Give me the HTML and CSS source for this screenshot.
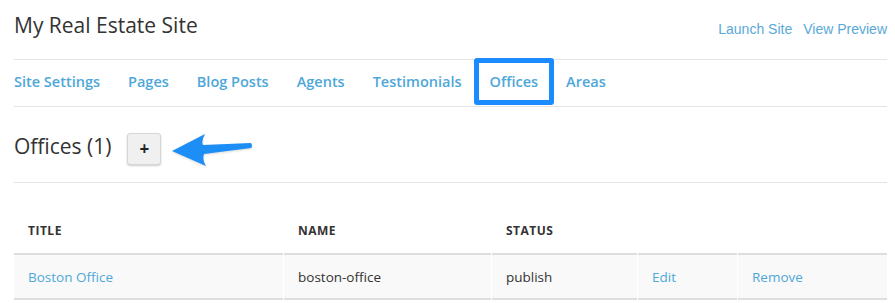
FILE: index.html
```html
<!DOCTYPE html>
<html lang="en">
<head>
    <meta charset="UTF-8">
    <title>My Real Estate Site - Offices</title>
    <link rel="stylesheet" href="styles.css">
</head>
<body>
    <div class="page">
        <header class="site-header">
            <h1>My Real Estate Site</h1>
            <div class="site-links">
                <a href="#">Launch Site</a>
                <a href="#">View Preview</a>
            </div>
        </header>
        <nav class="site-nav">
            <a href="#">Site Settings</a>
            <a href="#">Pages</a>
            <a href="#">Blog Posts</a>
            <a href="#">Agents</a>
            <a href="#">Testimonials</a>
            <a href="#" class="active">Offices</a>
            <a href="#">Areas</a>
        </nav>
        <div class="section-head">
            <h2>Offices (1)</h2>
            <button class="add-button">+</button>
            <svg class="arrow" width="84" height="40" viewBox="0 0 84 40">
                <path d="M1 21 L34 4 Q30 11 32 15 L80 13 Q82 16 80 18 L33 24 Q31 30 35 36 Z" fill="#1e8ef7"/>
            </svg>
        </div>
        <table class="list">
            <thead>
                <tr>
                    <th class="col-title">Title</th>
                    <th class="col-name">Name</th>
                    <th class="col-status">Status</th>
                    <th class="col-edit"></th>
                    <th></th>
                </tr>
            </thead>
            <tbody>
                <tr>
                    <td><a href="#">Boston Office</a></td>
                    <td>boston-office</td>
                    <td>publish</td>
                    <td><a href="#">Edit</a></td>
                    <td><a href="#">Remove</a></td>
                </tr>
            </tbody>
        </table>
    </div>
</body>
</html>
```

FILE: styles.css
```css
* {
    margin: 0;
    padding: 0;
    box-sizing: border-box;
}
body {
    font-family: 'Open Sans', sans-serif;
    color: #333;
    background: white;
}
a {
    color: #4ea7d9;
    text-decoration: none;
}
.page {
    padding: 0 8px 0 14px;
}
.site-header {
    display: flex;
    justify-content: space-between;
    align-items: flex-start;
    height: 60px;
    border-bottom: 1px solid #e4e4e4;
}
.site-header h1 {
    font-size: 21px;
    font-weight: 400;
    line-height: 24px;
    margin-top: 13px;
    color: #333;
}
.site-links {
    display: flex;
    gap: 11px;
    margin-top: 21px;
    font-family: 'Liberation Sans', sans-serif;
    font-size: 14px;
}
.site-links a {
    color: #5aa9d6;
}
.site-nav {
    display: flex;
    align-items: center;
    gap: 28px;
    height: 47px;
    padding-bottom: 3px;
    border-bottom: 1px solid #e4e4e4;
}
.site-nav a {
    font-size: 14.5px;
    font-weight: 600;
    position: relative;
}
.site-nav a.active::after {
    content: '';
    position: absolute;
    left: -16px;
    right: -16px;
    top: -14px;
    bottom: -14px;
    border: 5px solid #1a8cff;
    border-radius: 3px;
}
.section-head {
    display: flex;
    align-items: center;
    height: 76px;
    padding-top: 2px;
    border-bottom: 1px solid #e4e4e4;
}
.section-head h2 {
    font-size: 21px;
    font-weight: 400;
}
.add-button {
    width: 34px;
    height: 32px;
    margin: 6px 0 0 16px;
    background: #f0f0f0;
    border: 1px solid #d6d6d6;
    border-radius: 3px;
    box-shadow: 0 1px 2px rgba(0, 0, 0, 0.2);
    font-size: 17px;
    font-weight: 700;
    color: #222;
    font-family: 'Open Sans', sans-serif;
}
.arrow {
    margin: 8px 0 0 10px;
    filter: drop-shadow(0 1px 1px rgba(0, 0, 0, 0.15));
}
.list {
    width: calc(100% + 2px);
    margin: 25px 0 0 -1px;
    border-collapse: separate;
    border-spacing: 1px 0;
    font-size: 13.5px;
}
.list th {
    text-align: left;
    text-transform: uppercase;
    font-size: 12px;
    font-weight: 700;
    letter-spacing: 0.5px;
    padding: 14px;
    border-bottom: 2px solid #dedede;
}
.list td {
    background: #f9f9f9;
    padding: 13px 14px 12px;
    border-bottom: 2px solid #dedede;
}
.col-title { width: 269px; }
.col-name { width: 207px; }
.col-status { width: 145px; }
.col-edit { width: 99px; }
```
